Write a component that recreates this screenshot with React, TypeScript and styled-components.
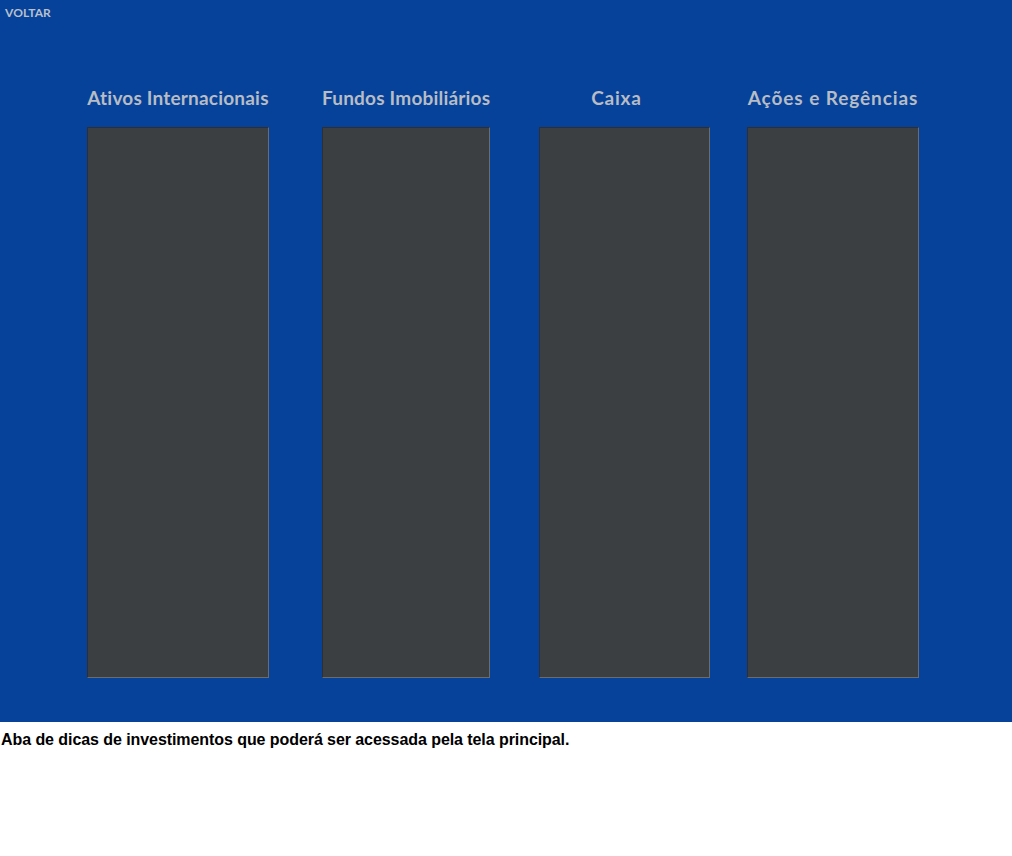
import React from "react";
import styled, { createGlobalStyle } from "styled-components";

const GlobalStyle = createGlobalStyle`
  html, body {
    margin: 0;
    padding: 0;
    background: #ffffff;
  }
`;

const Screen = styled.div`
  position: relative;
  height: 722px;
  background: #06429a;
  font-family: "Lato", "Open Sans", sans-serif;
`;

const BackLink = styled.a`
  display: inline-block;
  padding: 5px 0 0 5px;
  font-size: 12px;
  font-weight: 700;
  color: #b9c0cc;
  letter-spacing: 0.1px;
  cursor: pointer;
`;

const Columns = styled.div`
  display: flex;
  align-items: flex-start;
  padding: 66px 0 0 87px;
`;

const Column = styled.section<{ $width: number; $offset: number }>`
  display: flex;
  flex-direction: column;
  width: ${(p) => p.$width}px;
  margin-left: ${(p) => p.$offset}px;
`;

const Title = styled.h2<{ $shift?: number; $spacing?: number }>`
  margin: 0 0 17px;
  height: 24px;
  line-height: 24px;
  font-size: 19px;
  font-weight: 700;
  letter-spacing: ${(p) => p.$spacing ?? 0.2}px;
  color: #b7bcc5;
  text-align: center;
  white-space: nowrap;
  padding-right: ${(p) => p.$shift ?? 0}px;
`;

const Panel = styled.div`
  box-sizing: border-box;
  height: 551px;
  background: #3c3f42;
  border-top: 1px solid #2c2f33;
  border-left: 1px solid #2c2f33;
  border-right: 1px solid #6a6c6f;
  border-bottom: 1px solid #6a6c6f;
`;

const Caption = styled.p`
  margin: 0;
  padding: 9px 0 0 1px;
  font-family: "Liberation Sans", Arial, sans-serif;
  font-size: 16px;
  font-weight: 700;
  letter-spacing: -0.07px;
  color: #000;
`;

const categories = [
  { title: "Ativos Internacionais", width: 182, offset: 0 },
  { title: "Fundos Imobiliários", width: 168, offset: 53 },
  { title: "Caixa", width: 171, offset: 49, shift: 16, spacing: 0.8 },
  { title: "Ações e Regências", width: 172, offset: 37, spacing: 0.9 },
];

export default function App() {
  return (
    <>
      <GlobalStyle />
      <Screen>
        <BackLink>VOLTAR</BackLink>
        <Columns>
          {categories.map((c) => (
            <Column key={c.title} $width={c.width} $offset={c.offset}>
              <Title $shift={c.shift} $spacing={c.spacing}>
                {c.title}
              </Title>
              <Panel />
            </Column>
          ))}
        </Columns>
      </Screen>
      <Caption>Aba de dicas de investimentos que poderá ser acessada pela tela principal.</Caption>
    </>
  );
}
